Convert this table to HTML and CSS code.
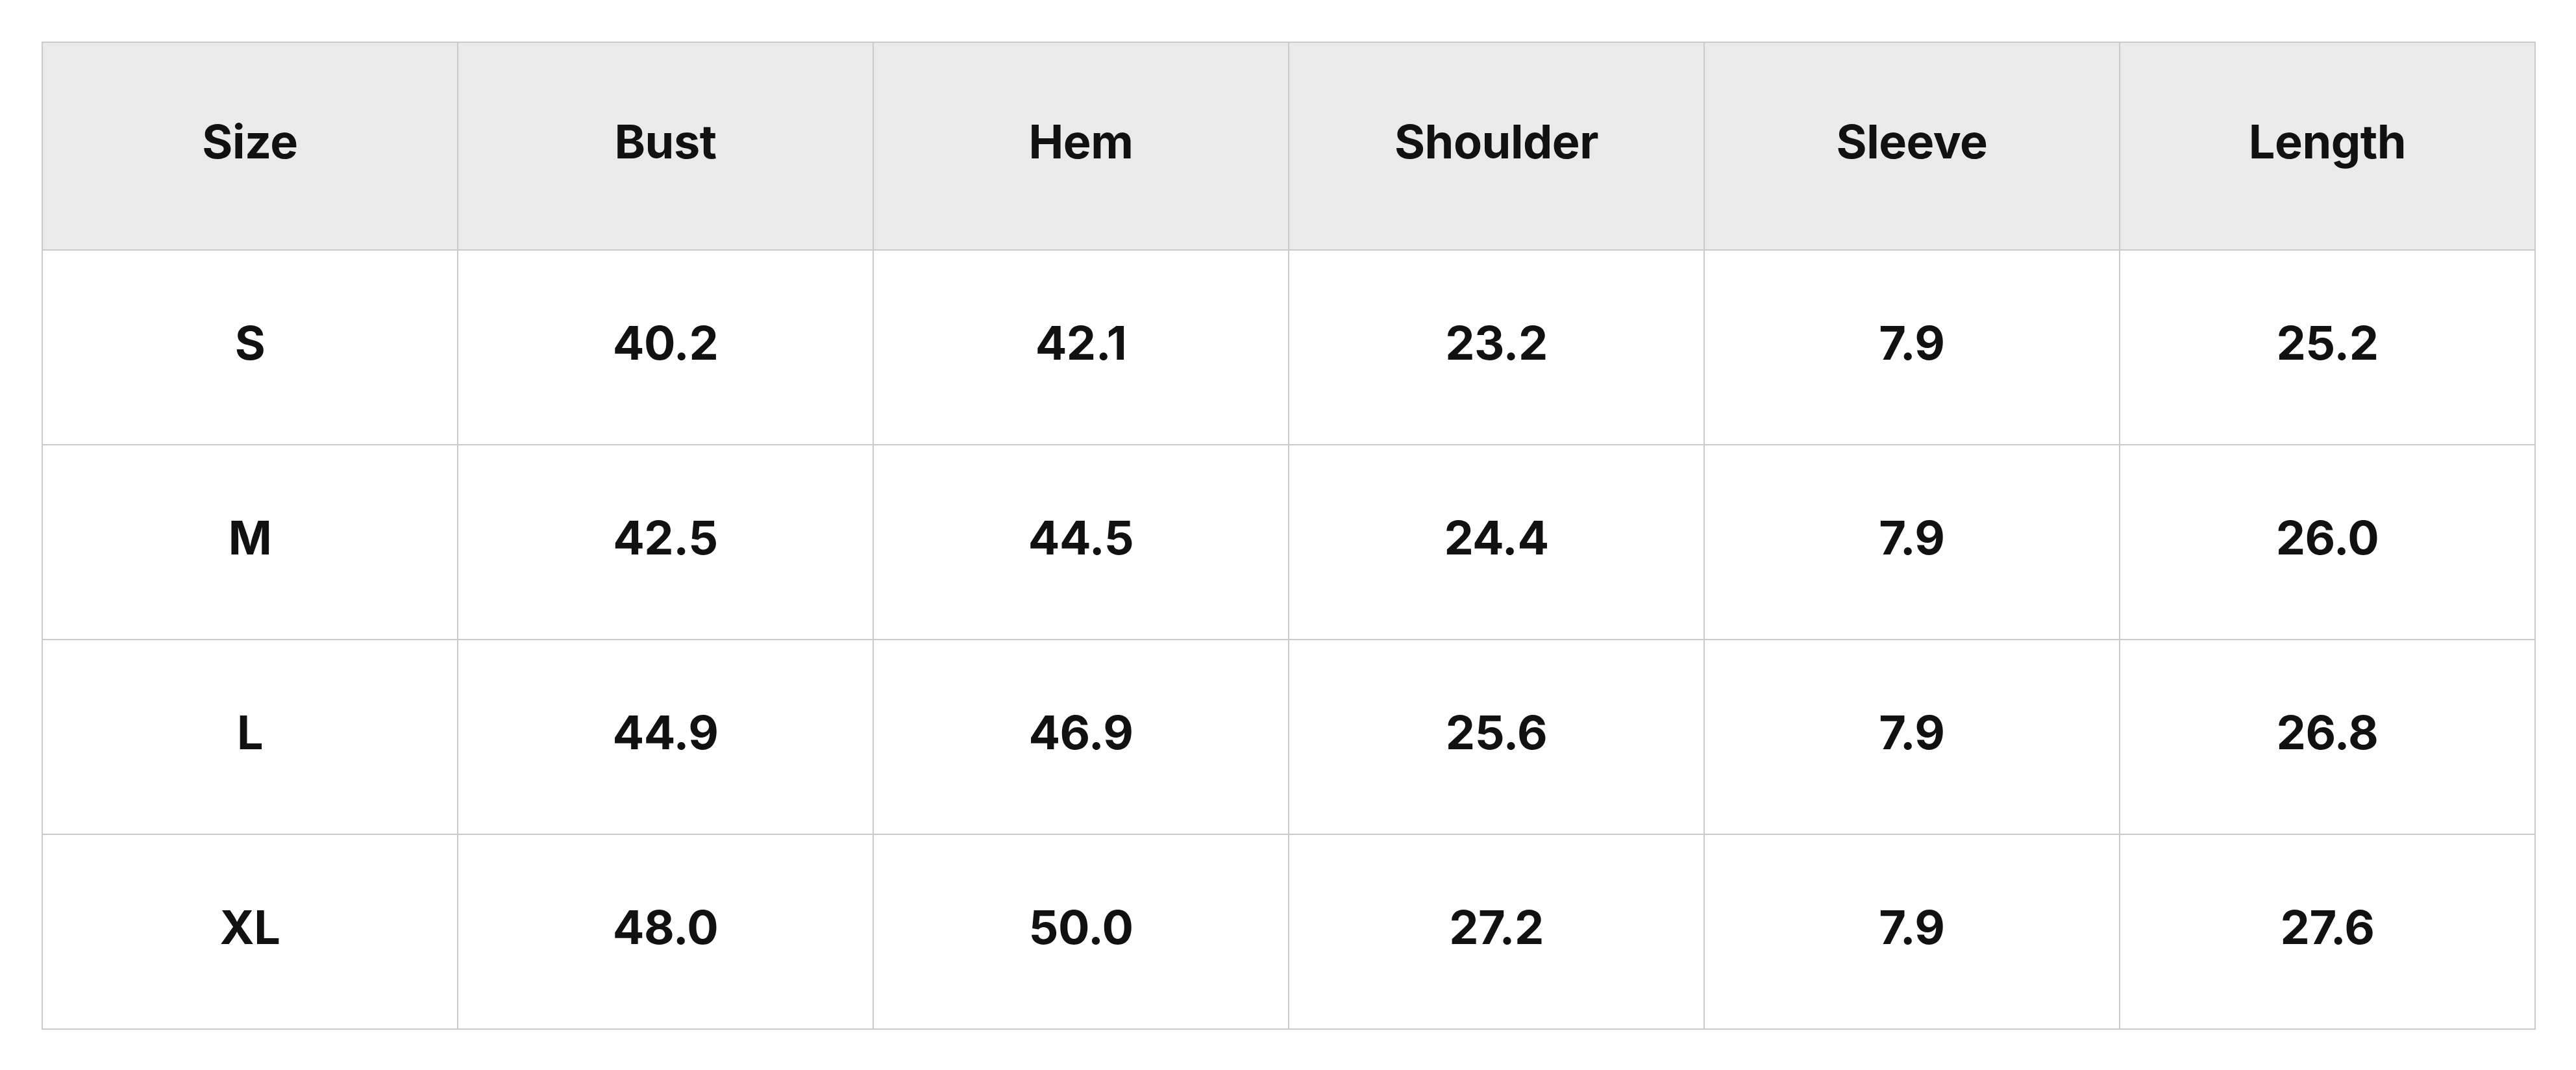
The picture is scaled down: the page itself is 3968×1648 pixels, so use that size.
FILE: index.html
```html
<!DOCTYPE html>
<html lang="en">
<head>
<meta charset="utf-8">
<title>Size Chart</title>
<link rel="stylesheet" href="styles.css">
</head>
<body>
<main class="page">
  <div class="chart" role="table">
    <div class="cell head" role="columnheader">Size</div>
    <div class="cell head" role="columnheader">Bust</div>
    <div class="cell head" role="columnheader">Hem</div>
    <div class="cell head" role="columnheader">Shoulder</div>
    <div class="cell head" role="columnheader">Sleeve</div>
    <div class="cell head" role="columnheader">Length</div>

    <div class="cell">S</div>
    <div class="cell">40.2</div>
    <div class="cell">42.1</div>
    <div class="cell">23.2</div>
    <div class="cell">7.9</div>
    <div class="cell">25.2</div>

    <div class="cell">M</div>
    <div class="cell">42.5</div>
    <div class="cell">44.5</div>
    <div class="cell">24.4</div>
    <div class="cell">7.9</div>
    <div class="cell">26.0</div>

    <div class="cell">L</div>
    <div class="cell">44.9</div>
    <div class="cell">46.9</div>
    <div class="cell">25.6</div>
    <div class="cell">7.9</div>
    <div class="cell">26.8</div>

    <div class="cell">XL</div>
    <div class="cell">48.0</div>
    <div class="cell">50.0</div>
    <div class="cell">27.2</div>
    <div class="cell">7.9</div>
    <div class="cell">27.6</div>
  </div>
</main>
</body>
</html>
```
FILE: styles.css
```css
* {
  box-sizing: border-box;
}

html, body {
  margin: 0;
  padding: 0;
  background: #ffffff;
}

body {
  font-family: "Inter", "Roboto", "Liberation Sans", sans-serif;
  color: #111111;
}

.page {
  padding: 64px;
}

.chart {
  display: grid;
  grid-template-columns: repeat(6, 640px);
  grid-template-rows: 320px repeat(4, 300px);
  width: 3842px;
  border-top: 2px solid #cbcbcb;
  border-left: 2px solid #cbcbcb;
}

.cell {
  display: flex;
  align-items: center;
  justify-content: center;
  padding-bottom: 15px;
  border-right: 2px solid #cbcbcb;
  border-bottom: 2px solid #cbcbcb;
  font-size: 72px;
  font-weight: 700;
  letter-spacing: -0.5px;
  line-height: 1;
  background: #ffffff;
}

.cell.head {
  background: #eaeaea;
}
```
